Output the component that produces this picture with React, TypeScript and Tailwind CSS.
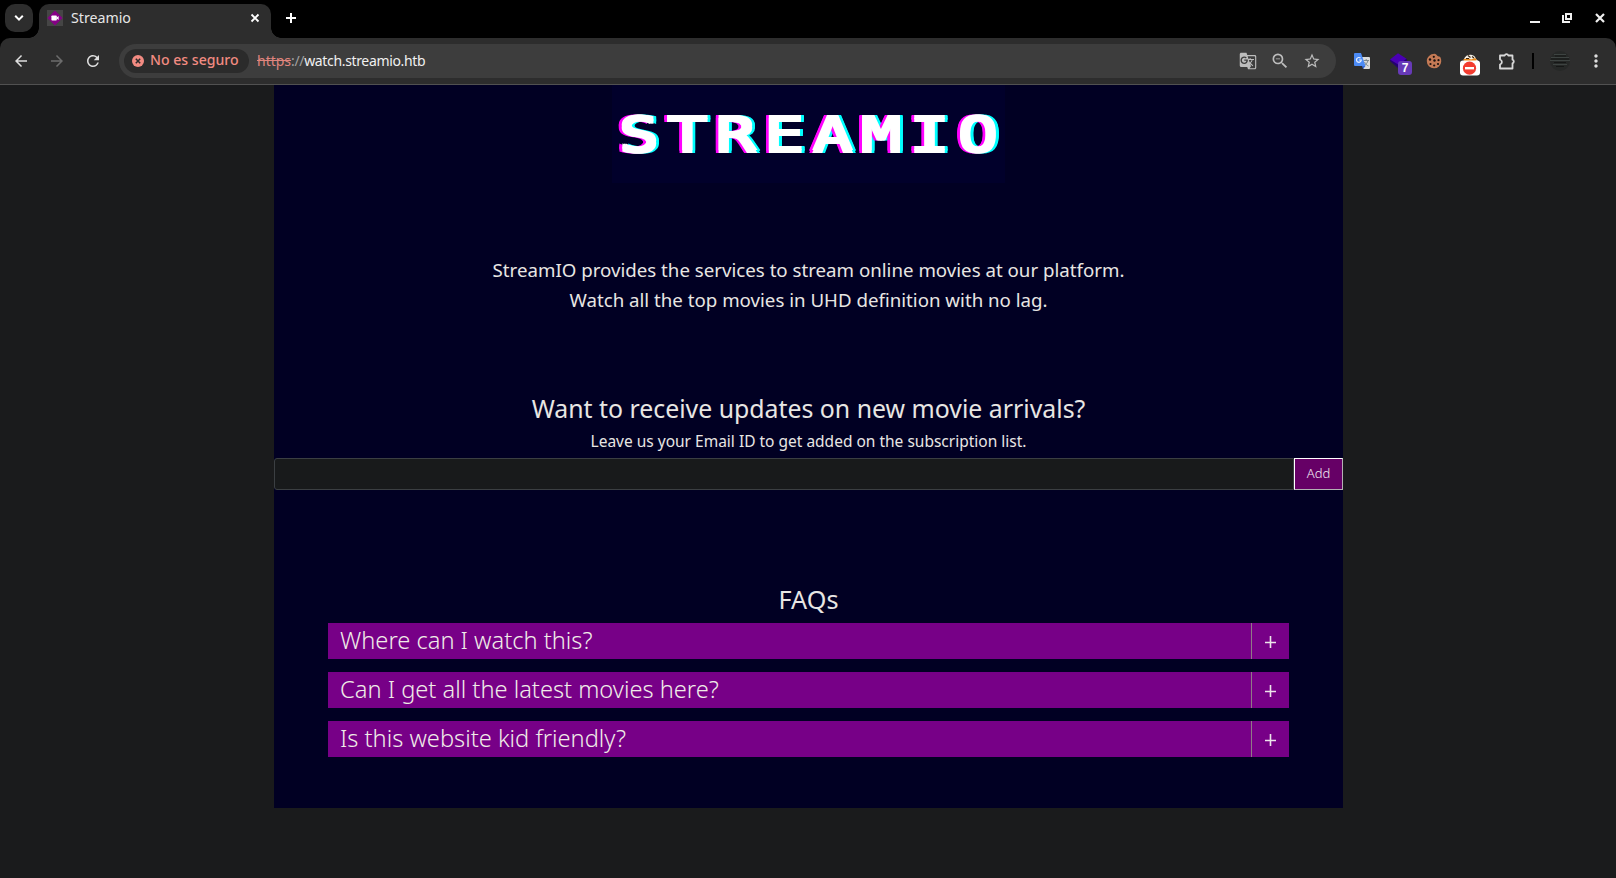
import { MdArrowBack, MdArrowForward, MdGTranslate, MdMoreVert, MdRefresh, MdStarOutline, MdZoomOut } from "react-icons/md";

const questions = [
  "Where can I watch this?",
  "Can I get all the latest movies here?",
  "Is this website kid friendly?",
];

function TabStrip() {
  return (
    <div className="flex h-[38px] items-end justify-between bg-black">
      <div className="flex items-end">
        <button className="mb-1.5 ml-[5px] flex size-7 items-center justify-center rounded-[10px] bg-[#2d2d2d]">
          <svg width="10" height="8" viewBox="0 0 10 8" fill="none" stroke="#fff" strokeWidth="2">
            <path d="M1.2 1.8 5 5.6 8.8 1.8" />
          </svg>
        </button>
        <div className="relative ml-1.5 flex h-[34px] w-[232px] items-center rounded-t-[10px] bg-[#2d2d2d] pr-[11px] pl-2 text-[14.2px] text-[#e6e6e6]">
          <span className="absolute bottom-0 -left-2.5 size-2.5 bg-[radial-gradient(circle_at_0_0,transparent_9.5px,#2d2d2d_10px)]" />
          <span className="absolute -right-2.5 bottom-0 size-2.5 bg-[radial-gradient(circle_at_100%_0,transparent_9.5px,#2d2d2d_10px)]" />
          <svg className="mb-1.5" width="16" height="16" viewBox="0 0 16 16">
            <path fill="#454545" d="M0 0h16v16H0z" />
            <path fill="#850085" d="M8 .4 15.6 8 8 15.6.4 8z" />
            <rect x="4.4" y="5.4" width="5.4" height="5.2" rx="0.8" fill="#fff" />
            <path fill="#fff" d="m9 8 2.600-2v4z" />
          </svg>
          <span className="mb-[7px] ml-2 flex-1">Streamio</span>
          <svg className="mb-1.5" width="10" height="10" viewBox="0 0 10 10" stroke="#fff" strokeWidth="1.900">
            <path d="m1.500 1.500 7 7m0-7-7 7" />
          </svg>
        </div>
        <svg className="mb-[15px] ml-[15px]" width="10" height="10" viewBox="0 0 10 10" stroke="#fff" strokeWidth="2">
          <path d="M5 0v10M0 5h10" />
        </svg>
      </div>
      <div className="mr-[11px] mb-[15px] flex items-end">
        <span className="mr-[22px] h-0.5 w-2.5 bg-[#f0f0f0]" />
        <svg className="mr-[23px]" width="10" height="10" viewBox="0 0 10 10" fill="none" stroke="#f0f0f0" strokeWidth="2">
          <path d="M4 1h5v5H4zM1 2v7h7" />
        </svg>
        <svg width="10" height="10" viewBox="0 0 10 10" stroke="#f0f0f0" strokeWidth="2.200">
          <path d="m1 1 8 8m0-8-8 8" />
        </svg>
      </div>
    </div>
  );
}

function TranslateColor() {
  return (
    <svg width="16" height="16" viewBox="0 0 16 16">
      <path fill="#dcdcdc" d="M6.500 4H15a1 1 0 0 1 1 1v10a1 1 0 0 1-1 1H9.500z" />
      <path fill="#3367d6" d="M8 13h3.500L9 16z" />
      <path fill="none" stroke="#7d8a8e" strokeWidth="1" d="M9.500 7.500H15M12.200 6v1.500M14 7.500c-.5 2-2 4-3.500 5M10.500 9c1 2 2 3 4 4" />
      <path fill="#4c8bf5" d="M1 0h6l4.500 13H1a1 1 0 0 1-1-1V1a1 1 0 0 1 1-1z" />
      <path fill="none" stroke="#e8f0ff" strokeWidth="1.200" d="M6.600 5.200a2.400 2.400 0 1 0 .7 1.800H5" />
    </svg>
  );
}

function Layers() {
  return (
    <span className="relative block h-[22px] w-[22px]">
      <svg width="17" height="16" viewBox="0 0 17 16">
        <path fill="#240070" d="m0 8 8.500 7.500L17 8V6H0z" />
        <path fill="#4a00b4" d="M0 6.500 8 .3l8.500 5.500-8 6z" />
      </svg>
      <span className="absolute top-[8px] left-2 flex h-3.5 w-3.5 items-center justify-center rounded-[3px] bg-[#673ab7] font-['Liberation_Sans',sans-serif] text-[12px] leading-none font-bold text-white">
        7
      </span>
    </span>
  );
}

function Cookie() {
  return (
    <svg width="16" height="16" viewBox="0 0 16 16">
      <path fill="#c47a55" d="M8.500.8c1.500 0 2 1.200 2.800 2 .8.800 2.700.4 3.200 1.600.6 1.400.9 2.800.7 4.300A7.100 7.100 0 0 1 8 15.300 7.200 7.200 0 0 1 .8 8C.8 4.200 4.500.8 8.500.8z" />
      <g fill="#1c1210">
        <circle cx="7.800" cy="3.800" r="1.100" />
        <circle cx="4" cy="6.500" r="1.200" />
        <circle cx="8.500" cy="7.500" r="1.200" />
        <circle cx="12.500" cy="7.200" r="1.100" />
        <circle cx="4.500" cy="11" r="1.100" />
        <circle cx="8.200" cy="12.500" r="1.100" />
        <circle cx="12" cy="11" r="1.100" />
      </g>
    </svg>
  );
}

function Blocker() {
  return (
    <svg width="20" height="22" viewBox="0 0 20 22">
      <path fill="#f5f0e6" d="M4 5c1-3 4-4.500 7-4.300 2.500.2 4.500 2 5 4.300L18 7H5z" />
      <path fill="#e88a1c" d="M3 5.500 8 4l3 1.500L15 4l2 2-3 2H5z" />
      <path stroke="#3a2410" strokeWidth="1.200" d="m8 1.500 2.500 2M12 2.500l2 1.500M6 4.500h3" />
      <rect y="6.500" width="20" height="15" rx="3" fill="#fff" />
      <circle cx="9.500" cy="14.200" r="6.600" fill="#f23c30" />
      <path fill="#fff" d="M5 13h9v2.400H5z" />
    </svg>
  );
}

function Toolbar() {
  return (
    <div className="bg-black">
      <div className="flex h-[47px] items-center rounded-t-[10px] border-b border-[#515151] bg-[#2d2d2d]">
        <div className="ml-3 flex items-center gap-[18px] text-[18px] text-[#dedede]">
          <MdArrowBack />
          <MdArrowForward className="text-[#6c6c6c]" />
          <MdRefresh />
        </div>
        <div className="ml-[17px] flex h-[34px] w-[1217px] items-center rounded-full bg-[#3d3d3d] pr-[15px] pl-[5px]">
          <div className="flex h-6 w-[125px] items-center rounded-full bg-[#2b2b2b] pl-2 text-[14.100px] font-medium whitespace-nowrap text-[#f28b82]">
            <svg className="mr-1.5 shrink-0" width="12" height="12" viewBox="0 0 12 12">
              <circle cx="6" cy="6" r="6" fill="#f28b82" />
              <path stroke="#2b2b2b" strokeWidth="1.500" d="m3.800 3.800 4.400 4.400m0-4.400L3.800 8.200" />
            </svg>
            <span className="mb-0.5">No es seguro</span>
          </div>
          <div className="mb-0.5 ml-2 flex-1 text-[14px]">
            <span className="text-[#e0857d] line-through">https</span>
            <span className="tracking-[-0.35px]">
              <span className="text-[#a0a0a0]">://</span>
              <span className="text-[#f0f0f0]">watch.streamio.htb</span>
            </span>
          </div>
          <div className="flex items-center gap-[13px] text-[#bdbdbd]">
            <MdGTranslate className="text-[18px]" />
            <MdZoomOut className="text-[20px]" />
            <MdStarOutline className="text-[18px]" />
          </div>
        </div>
        <div className="ml-[18px] flex flex-1 items-center">
          <TranslateColor />
          <div className="mt-1.5 ml-5">
            <Layers />
          </div>
          <div className="ml-[14px]">
            <Cookie />
          </div>
          <div className="mt-[7px] ml-[18px]">
            <Blocker />
          </div>
          <svg className="ml-[19px]" width="17" height="17" viewBox="0 0 17 17">
            <path
              fill="none"
              stroke="#d8d8d8"
              strokeWidth="1.800"
              strokeLinejoin="round"
              d="M1 2.500h4.700a1.900 1.900 0 0 1 3.600 0H13.500v4.200a1.900 1.900 0 0 1 0 3.600V15.500H1v-4a2.600 2.600 0 0 0 0-5z"
            />
          </svg>
          <span className="ml-4 h-4 w-0.5 bg-black" />
          <svg className="ml-4" width="20" height="20" viewBox="0 0 20 20">
            <circle cx="10" cy="10" r="10" fill="#262827" />
            <path stroke="#3d4341" strokeWidth="1" d="M4 3.500h12M1 6.500h18M0 9.500h20M3 13.500h14" />
            <path stroke="#151716" strokeWidth="1" d="M5 5h11M1 8h18M4 11.500h12M6 15.500h8" />
          </svg>
          <MdMoreVert className="ml-4 text-[20px] text-[#dedede]" />
        </div>
      </div>
    </div>
  );
}

function Faq({ question }: { question: string }) {
  return (
    <div className="flex h-9 bg-[#770087] text-[#f0ece8]">
      <div className="flex-1 pb-0.5 pl-3 text-[23.650px] leading-[34px] font-light">{question}</div>
      <div className="flex w-[38px] items-center justify-center border-l border-[#8f7a86] pt-0.5">
        <svg width="11" height="12" viewBox="0 0 11 12" stroke="#ece4ea" strokeWidth="1.600">
          <path d="M5.500 0v12M0 6.500h11" />
        </svg>
      </div>
    </div>
  );
}

export default function App() {
  return (
    <div className="h-[878px] overflow-hidden bg-[#1a1b1c] font-['Noto_Sans',sans-serif]">
      <TabStrip />
      <Toolbar />
      <main className="ml-[274px] h-[723px] w-[1069px] bg-[#010023] text-center text-[#e8e6e3]">
        <div className="mx-auto flex h-[98px] w-[393px] justify-center bg-[#01002b]">
          <h1 className="origin-center scale-x-[1.4] pl-[6px] font-['DejaVu_Sans_Mono',monospace] text-[47.5px] leading-[100px] tracking-[6px] text-white [text-shadow:1.2px_1.5px_0_#fff,-1.2px_1.5px_0_#fff,1.2px_-1.5px_0_#fff,-1.2px_-1.5px_0_#fff,0_1.5px_0_#fff,0_-1.5px_0_#fff,-3.2px_1.5px_0_#f0f,-3.2px_0_0_#f0f,-3.2px_-1.5px_0_#f0f,3.2px_1.5px_0_#0ff,3.2px_0_0_#0ff,3.2px_-1.5px_0_#0ff]">
            STREAMIO
          </h1>
        </div>
        <p className="mt-[72px] text-[18.700px] leading-[30px]">
          StreamIO provides the services to stream online movies at our platform.
          <br />
          Watch all the top movies in UHD definition with no lag.
        </p>
        <h2 className="mt-[76px] text-[24.850px] leading-[34px]">Want to receive updates on new movie arrivals?</h2>
        <p className="mt-1 text-[15.500px] leading-6">Leave us your Email ID to get added on the subscription list.</p>
        <form className="mt-[5px] flex h-8">
          <input className="min-w-0 flex-1 rounded-l-[3px] border border-[#3b3f42] bg-[#181a1b] px-3 outline-none" />
          <button
            type="button"
            className="w-[49px] border border-t-white border-r-[#b4b0b4] border-b-[#b4b0b4] border-l-white bg-[#660066] text-[13px] font-light text-[#f4ecf4]"
          >
            Add
          </button>
        </form>
        <section className="mt-[94px] pr-[54px] pl-[54px]">
          <h2 className="text-[25.200px] leading-[30px]">FAQs</h2>
          <div className="mt-[9px] flex flex-col gap-[13px] text-left">
            {questions.map((q) => (
              <Faq key={q} question={q} />
            ))}
          </div>
        </section>
      </main>
    </div>
  );
}
